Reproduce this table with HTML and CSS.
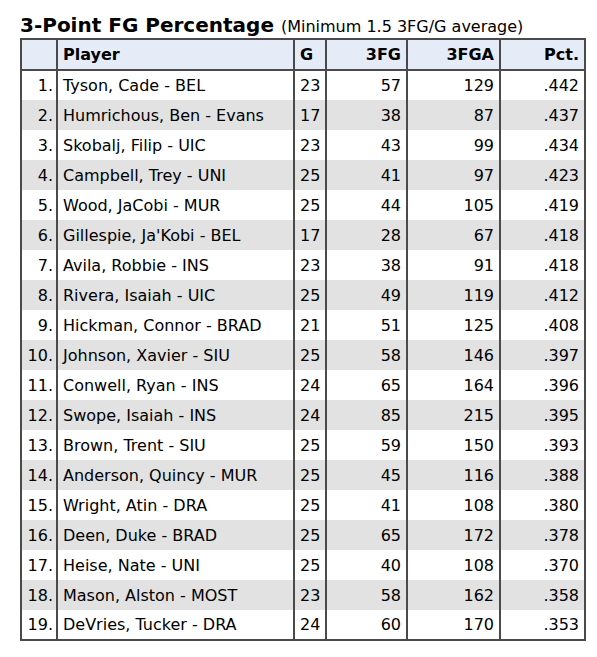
FILE: index.html
```html
<!DOCTYPE html>
<html lang="en">
<head>
    <meta charset="UTF-8">
    <title>3-Point FG Percentage</title>
    <link rel="stylesheet" href="styles.css">
</head>
<body>
    <section class="leaders">
        <h2 class="leaders-title">3-Point FG Percentage <span class="leaders-note">(Minimum 1.5 3FG/G average)</span></h2>
        <table class="stat-table">
            <thead>
                <tr>
                    <th class="rank"></th>
                    <th class="player">Player</th>
                    <th class="games">G</th>
                    <th class="num dotted">3FG</th>
                    <th class="num dotted">3FGA</th>
                    <th class="num">Pct.</th>
                </tr>
            </thead>
            <tbody>
                <tr><td class="rank">1.</td><td class="player">Tyson, Cade - BEL</td><td class="games">23</td><td class="num dotted">57</td><td class="num dotted">129</td><td class="num">.442</td></tr>
                <tr><td class="rank">2.</td><td class="player">Humrichous, Ben - Evans</td><td class="games">17</td><td class="num dotted">38</td><td class="num dotted">87</td><td class="num">.437</td></tr>
                <tr><td class="rank">3.</td><td class="player">Skobalj, Filip - UIC</td><td class="games">23</td><td class="num dotted">43</td><td class="num dotted">99</td><td class="num">.434</td></tr>
                <tr><td class="rank">4.</td><td class="player">Campbell, Trey - UNI</td><td class="games">25</td><td class="num dotted">41</td><td class="num dotted">97</td><td class="num">.423</td></tr>
                <tr><td class="rank">5.</td><td class="player">Wood, JaCobi - MUR</td><td class="games">25</td><td class="num dotted">44</td><td class="num dotted">105</td><td class="num">.419</td></tr>
                <tr><td class="rank">6.</td><td class="player">Gillespie, Ja'Kobi - BEL</td><td class="games">17</td><td class="num dotted">28</td><td class="num dotted">67</td><td class="num">.418</td></tr>
                <tr><td class="rank">7.</td><td class="player">Avila, Robbie - INS</td><td class="games">23</td><td class="num dotted">38</td><td class="num dotted">91</td><td class="num">.418</td></tr>
                <tr><td class="rank">8.</td><td class="player">Rivera, Isaiah - UIC</td><td class="games">25</td><td class="num dotted">49</td><td class="num dotted">119</td><td class="num">.412</td></tr>
                <tr><td class="rank">9.</td><td class="player">Hickman, Connor - BRAD</td><td class="games">21</td><td class="num dotted">51</td><td class="num dotted">125</td><td class="num">.408</td></tr>
                <tr><td class="rank">10.</td><td class="player">Johnson, Xavier - SIU</td><td class="games">25</td><td class="num dotted">58</td><td class="num dotted">146</td><td class="num">.397</td></tr>
                <tr><td class="rank">11.</td><td class="player">Conwell, Ryan - INS</td><td class="games">24</td><td class="num dotted">65</td><td class="num dotted">164</td><td class="num">.396</td></tr>
                <tr><td class="rank">12.</td><td class="player">Swope, Isaiah - INS</td><td class="games">24</td><td class="num dotted">85</td><td class="num dotted">215</td><td class="num">.395</td></tr>
                <tr><td class="rank">13.</td><td class="player">Brown, Trent - SIU</td><td class="games">25</td><td class="num dotted">59</td><td class="num dotted">150</td><td class="num">.393</td></tr>
                <tr><td class="rank">14.</td><td class="player">Anderson, Quincy - MUR</td><td class="games">25</td><td class="num dotted">45</td><td class="num dotted">116</td><td class="num">.388</td></tr>
                <tr><td class="rank">15.</td><td class="player">Wright, Atin - DRA</td><td class="games">25</td><td class="num dotted">41</td><td class="num dotted">108</td><td class="num">.380</td></tr>
                <tr><td class="rank">16.</td><td class="player">Deen, Duke - BRAD</td><td class="games">25</td><td class="num dotted">65</td><td class="num dotted">172</td><td class="num">.378</td></tr>
                <tr><td class="rank">17.</td><td class="player">Heise, Nate - UNI</td><td class="games">25</td><td class="num dotted">40</td><td class="num dotted">108</td><td class="num">.370</td></tr>
                <tr><td class="rank">18.</td><td class="player">Mason, Alston - MOST</td><td class="games">23</td><td class="num dotted">58</td><td class="num dotted">162</td><td class="num">.358</td></tr>
                <tr><td class="rank">19.</td><td class="player">DeVries, Tucker - DRA</td><td class="games">24</td><td class="num dotted">60</td><td class="num dotted">170</td><td class="num">.353</td></tr>
            </tbody>
        </table>
    </section>
</body>
</html>
```

FILE: styles.css
```css
* {
    margin: 0;
    padding: 0;
    box-sizing: border-box;
}

body {
    font-family: 'DejaVu Sans', Verdana, sans-serif;
    background: #fff;
    color: #000;
}

.leaders {
    padding: 13px 11px 0 20px;
}

/* title line */
.leaders-title {
    font-size: 20px;
    font-weight: bold;
    line-height: 25px;
}

.leaders-note {
    font-size: 16px;
    font-weight: normal;
    line-height: 1;
}

/* stat table */
.stat-table {
    width: 566px;
    border-collapse: collapse;
    border: 2px solid #4a4a4a;
    font-size: 16px;
    table-layout: fixed;
}

.stat-table th,
.stat-table td {
    height: 30px;
    padding: 0 5px;
    border-left: 2px solid #4a4a4a;
    white-space: nowrap;
}

.stat-table thead th {
    background-color: #e6ecf7;
    border-bottom: 2px solid #4a4a4a;
    height: 31px;
    font-weight: bold;
}

.stat-table tbody tr:nth-child(even) {
    background-color: #e2e2e2;
}

.stat-table .rank {
    width: 36px;
    text-align: right;
    padding-right: 3px;
}

.stat-table .player {
    width: 237px;
    text-align: left;
}

.stat-table .games {
    width: 32px;
    text-align: left;
}

.stat-table .num {
    text-align: right;
}

.stat-table .dotted {
    width: 81px;
    border-right: 1px dotted #555;
}

.stat-table .dotted + .dotted {
    width: 93px;
}
```
